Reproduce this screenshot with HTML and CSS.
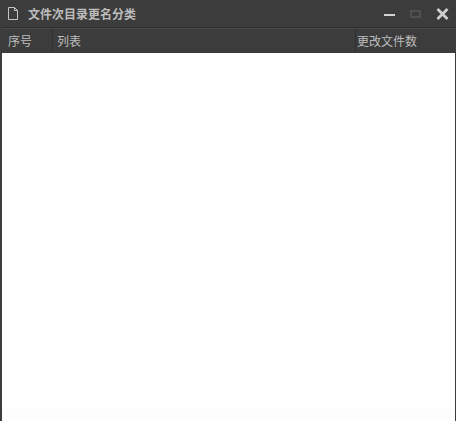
FILE: index.html
```html
<!DOCTYPE html>
<html lang="zh-CN">
<head>
    <meta charset="UTF-8">
    <title>文件次目录更名分类</title>
    <link rel="stylesheet" href="styles.css">
</head>
<body>
    <div class="window">
        <div class="title-bar">
            <svg class="file-icon" width="10" height="13" viewBox="0 0 10 13">
                <path d="M.5.5h6l3 3v9H.5zM6.5.5v3h3" fill="none" stroke="#c4c4c4"/>
            </svg>
            <span class="title">文件次目录更名分类</span>
            <div class="controls">
                <span class="btn-min"></span>
                <span class="btn-max"></span>
                <svg class="btn-close" width="13" height="12" viewBox="0 0 13 12">
                    <path d="M1.5 1l10 10M11.500 1l-10 10" stroke="#d0d0d0" stroke-width="2.8"/>
                </svg>
            </div>
        </div>
        <div class="list-head">
            <div class="col col-num">序号</div>
            <div class="col col-list">列表</div>
            <div class="col col-count">更改文件数</div>
        </div>
        <div class="list-body"></div>
    </div>
</body>
</html>
```

FILE: styles.css
```css
* {
    margin: 0;
    padding: 0;
    box-sizing: border-box;
}

html, body {
    height: 100%;
    overflow: hidden;
}

body {
    font-family: "Noto Sans CJK SC", "Liberation Sans", sans-serif;
    background: #3c3c3c;
}

.window {
    height: 421px;
    display: flex;
    flex-direction: column;
    padding: 0 1px 0 2px;
    background: #3c3c3c;
}

.title-bar {
    height: 28px;
    display: flex;
    align-items: center;
    padding-left: 6px;
    border-bottom: 1px solid #2e2e2e;
}

.file-icon {
    margin-right: 10px;
}

.title {
    color: #bcbcbc;
    font-size: 12px;
    font-weight: 700;
}

.controls {
    margin-left: auto;
    display: flex;
    align-items: center;
    padding-right: 6px;
}

.btn-min {
    width: 11px;
    height: 2px;
    background: #d4d4d4;
    margin: 3px 15px 0 0;
}

.btn-max {
    width: 11px;
    height: 8px;
    border: 2px solid #505050;
    margin-right: 15px;
}

.list-head {
    height: 25px;
    display: flex;
    color: #bcbcbc;
    font-size: 12px;
    line-height: 23px;
    border-top: 1px solid #484848;
}

.col {
    padding-left: 6px;
    border-right: 1px solid #303030;
}

.col-num {
    width: 51px;
}

.col-list {
    width: 303px;
    padding-left: 4px;
}

.col-count {
    flex: 1;
    padding-left: 1px;
    border-right: 0;
}

.list-body {
    flex: 1;
    background: linear-gradient(#fff 355px, #fdfdfd 355px);
}
```
